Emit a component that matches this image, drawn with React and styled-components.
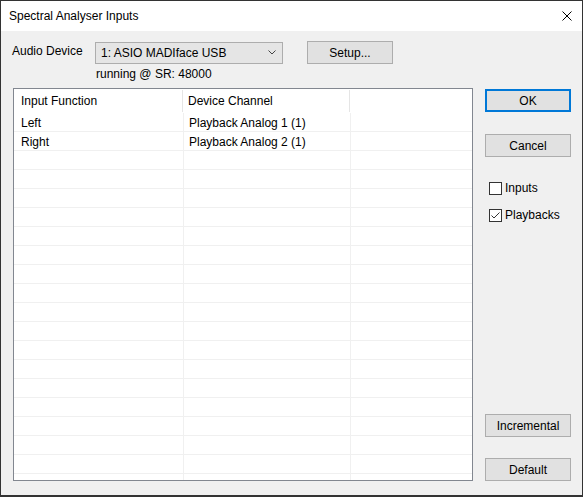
import React from "react";
import styled, { createGlobalStyle } from "styled-components";

const Global = createGlobalStyle`
  html, body { margin: 0; padding: 0; background: #ffffff; }
  * { box-sizing: border-box; }
`;

const Window = styled.div`
  width: 583px;
  height: 497px;
  border: 1px solid #333333;
  border-bottom-width: 2px;
  display: flex;
  flex-direction: column;
  font-family: "Liberation Sans", Arial, sans-serif;
  font-size: 12px;
  color: #000;
  overflow: hidden;
`;

const TitleBar = styled.div`
  height: 30px;
  flex: none;
  background: #ffffff;
  display: flex;
  align-items: center;
  justify-content: space-between;
  padding: 0 9px 0 8px;
`;

const Title = styled.span`
  font-size: 12px;
`;

const CloseIcon = styled.svg`
  width: 10px;
  height: 10px;
  margin-right: 1px;
`;

const Body = styled.div`
  flex: 1;
  background: #f0f0f0;
  padding: 10px 10px 14px 12px;
  display: flex;
  flex-direction: column;
`;

const TopRow = styled.div`
  display: flex;
  align-items: center;
`;

const Label = styled.span`
  width: 83px;
  margin-left: -1px;
  margin-top: -4px;
`;

const Combo = styled.div`
  width: 188px;
  height: 22px;
  background: #e5e5e5;
  border: 1px solid #adadad;
  display: flex;
  align-items: center;
  justify-content: space-between;
  padding: 0 6px 0 5px;
`;

const Button = styled.button`
  width: ${(p) => p.$w || 86}px;
  height: ${(p) => p.$h || 23}px;
  margin-left: ${(p) => p.$ml || 0}px;
  margin-top: ${(p) => p.$mt || 0}px;
  background: #e1e1e1;
  border: ${(p) => (p.$default ? "2px solid #0078d7" : "1px solid #adadad")};
  font-family: "Liberation Sans", Arial, sans-serif;
  font-size: 12px;
  color: #000;
  padding: 0;
  flex: none;
`;

const Status = styled.div`
  margin-left: 83px;
  margin-top: 3px;
  height: 14px;
  line-height: 14px;
`;

const Main = styled.div`
  flex: 1;
  min-height: 0;
  display: flex;
  margin-top: 7px;
  gap: 12px;
`;

const Grid = styled.div`
  width: 460px;
  height: 393px;
  border: 1px solid #828790;
  background: #fff;
  overflow: hidden;
  display: flex;
  flex-direction: column;
`;

const HeaderRow = styled.div`
  height: 24px;
  flex: none;
  display: grid;
  grid-template-columns: 169px 167px 1fr;
`;

const HeaderCell = styled.div`
  display: flex;
  align-items: center;
  padding-left: ${(p) => p.$pl}px;
  border-right: ${(p) => (p.$last ? "none" : "1px solid #e5e5e5")};
  margin: 1px 0 1px;
`;

const Row = styled.div`
  height: 19px;
  flex: none;
  display: grid;
  grid-template-columns: 170px 167px 1fr;
  border-bottom: 1px solid #f0f0f0;
`;

const Cell = styled.div`
  display: flex;
  align-items: center;
  padding-left: ${(p) => p.$pl}px;
  padding-top: 1px;
  border-right: ${(p) => (p.$last ? "none" : "1px solid #f0f0f0")};
  white-space: nowrap;
`;

const Side = styled.div`
  width: 86px;
  display: flex;
  flex-direction: column;
`;

const CheckRow = styled.label`
  display: flex;
  align-items: center;
  margin-top: ${(p) => p.$mt}px;
  margin-left: 4px;
  gap: 3px;
  height: 14px;
`;

const Box = styled.span`
  width: 13px;
  height: 13px;
  background: #fff;
  border: 1px solid #333;
  display: flex;
  align-items: center;
  justify-content: center;
`;

const Spacer = styled.div`
  flex: 1;
`;

const rows = [
  ["Left", "Playback Analog 1 (1)"],
  ["Right", "Playback Analog 2 (1)"],
];
const blanks = Array.from({ length: 20 });

export default function App() {
  return (
    <>
      <Global />
      <Window>
        <TitleBar>
          <Title>Spectral Analyser Inputs</Title>
          <CloseIcon viewBox="0 0 10 10">
            <path d="M0.5 0.5 L9.5 9.5 M9.5 0.5 L0.5 9.5" stroke="#000" strokeWidth="1" />
          </CloseIcon>
        </TitleBar>
        <Body>
          <TopRow>
            <Label>Audio Device</Label>
            <Combo>
              <span>1: ASIO MADIface USB</span>
              <svg width="8" height="5" viewBox="0 0 8 5">
                <path d="M0.5 0.5 L4 4 L7.5 0.5" stroke="#444" fill="none" strokeWidth="1" />
              </svg>
            </Combo>
            <Button $ml={24} $w={86}>Setup...</Button>
          </TopRow>
          <Status>running @ SR: 48000</Status>
          <Main>
            <Grid>
              <HeaderRow>
                <HeaderCell $pl={7}>Input Function</HeaderCell>
                <HeaderCell $pl={5}>Device Channel</HeaderCell>
                <HeaderCell $last $pl={5} />
              </HeaderRow>
              {rows.map(([a, b]) => (
                <Row key={a}>
                  <Cell $pl={7}>{a}</Cell>
                  <Cell $pl={5}>{b}</Cell>
                  <Cell $last $pl={5} />
                </Row>
              ))}
              {blanks.map((_, i) => (
                <Row key={i}>
                  <Cell $pl={7} />
                  <Cell $pl={5} />
                  <Cell $last $pl={5} />
                </Row>
              ))}
            </Grid>
            <Side>
              <Button $default $mt={1}>OK</Button>
              <Button $mt={22}>Cancel</Button>
              <CheckRow $mt={24}>
                <Box />
                Inputs
              </CheckRow>
              <CheckRow $mt={13}>
                <Box>
                  <svg width="11" height="11" viewBox="0 0 11 11">
                    <path d="M1.5 5.5 L4 8 L9.5 2.5" stroke="#333" fill="none" strokeWidth="1" />
                  </svg>
                </Box>
                Playbacks
              </CheckRow>
              <Spacer />
              <Button>Incremental</Button>
              <Button $mt={21}>Default</Button>
            </Side>
          </Main>
        </Body>
      </Window>
    </>
  );
}
